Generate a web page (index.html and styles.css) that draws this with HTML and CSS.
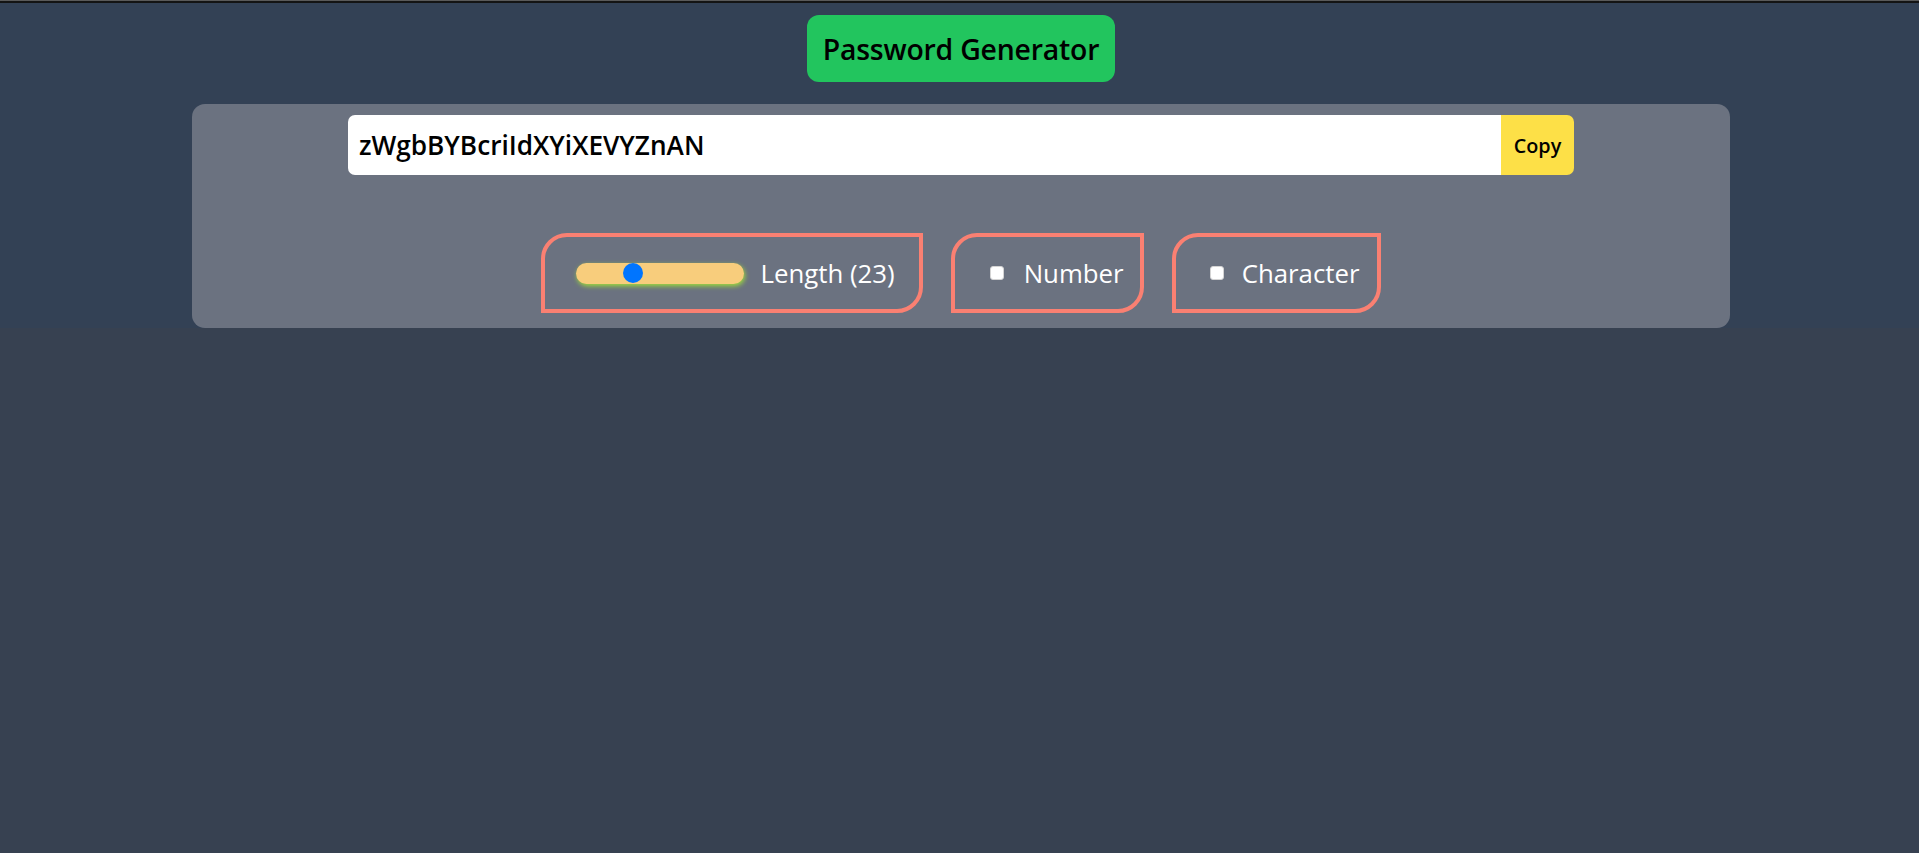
FILE: index.html
```html
<!DOCTYPE html>
<html lang="en">
<head>
<meta charset="utf-8">
<title>Password Generator</title>
<link rel="stylesheet" href="styles.css">
</head>
<body>
<div class="topline"></div>
<header class="header">
  <h1 class="title">Password Generator</h1>
  <section class="card">
    <div class="pw-row">
      <input class="pw-input" type="text" value="zWgbBYBcriIdXYiXEVYZnAN" readonly>
      <button class="copy-btn" type="button">Copy</button>
    </div>
    <div class="options">
      <label class="opt opt-length">
        <input class="range" type="range" min="6" max="60" value="23">
        <span class="opt-text">Length (23)</span>
      </label>
      <label class="opt opt-number">
        <input class="check" type="checkbox">
        <span class="opt-text">Number</span>
      </label>
      <label class="opt opt-char">
        <input class="check" type="checkbox">
        <span class="opt-text">Character</span>
      </label>
    </div>
  </section>
</header>
</body>
</html>
```

FILE: styles.css
```css
* { box-sizing: border-box; }

html, body {
  margin: 0;
  padding: 0;
}

body {
  background: #374151;
  min-height: 100vh;
  font-family: "Open Sans", "Noto Sans", "Liberation Sans", sans-serif;
}

.topline {
  height: 3px;
  background: #141414;
  border-top: 1px solid #5a5a5a;
}

.header {
  background: #334155;
  display: flex;
  flex-direction: column;
  align-items: center;
  padding: 12px 0 0 3px;
}

.title {
  margin: 0;
  height: 67px;
  display: flex;
  align-items: center;
  padding: 0 16px;
  background: #22c55e;
  border-radius: 12px;
  color: #000;
  font-size: 28.4px;
  font-weight: 600;
  letter-spacing: -0.2px;
}

.card {
  margin-top: 22px;
  width: 1538px;
  background: #6b7280;
  border-radius: 13px;
  padding: 11px 0 15px;
  display: flex;
  flex-direction: column;
  align-items: center;
}

.pw-row {
  width: 1226px;
  height: 60px;
  display: flex;
}

.pw-input {
  flex: 1;
  min-width: 0;
  border: 0;
  outline: none;
  margin: 0;
  background: #fff;
  border-radius: 7px 0 0 7px;
  padding: 0 0 0 11px;
  font-family: inherit;
  font-size: 26.2px;
  font-weight: 600;
  color: #000;
}

.copy-btn {
  width: 73px;
  border: 0;
  margin: 0;
  padding: 0;
  background: #fde047;
  border-radius: 0 7px 7px 0;
  font-family: inherit;
  font-size: 19.8px;
  font-weight: 600;
  color: #000;
}

.options {
  margin-top: 58px;
  display: flex;
  gap: 28px;
}

.opt {
  height: 80px;
  display: flex;
  align-items: center;
  border: 4px solid #fa8072;
  border-radius: 26px 0 26px 0;
  color: #fff;
  font-size: 25.8px;
}

.opt-text {
  line-height: 1;
  padding-top: 1px;
}

.opt-length {
  padding: 0 24px 0 31px;
  gap: 16px;
}

.opt-number {
  padding: 0 16px 0 35px;
  gap: 20px;
}

.opt-char {
  padding: 0 17px 0 34px;
  gap: 18px;
}

.range {
  -webkit-appearance: none;
  appearance: none;
  margin: 0;
  width: 168px;
  height: 21px;
  border-radius: 11px;
  background: #f8cd7c;
  box-shadow: 1px 2px 5px rgba(163, 230, 53, 0.95);
  outline: none;
}

.range::-webkit-slider-thumb {
  -webkit-appearance: none;
  appearance: none;
  width: 20px;
  height: 20px;
  border-radius: 50%;
  background: #0075ff;
  border: 0;
}

.check {
  -webkit-appearance: none;
  appearance: none;
  margin: 0;
  width: 14px;
  height: 14px;
  background: #fff;
  border: 1px solid #d4d4d4;
  border-radius: 3px;
}
```
